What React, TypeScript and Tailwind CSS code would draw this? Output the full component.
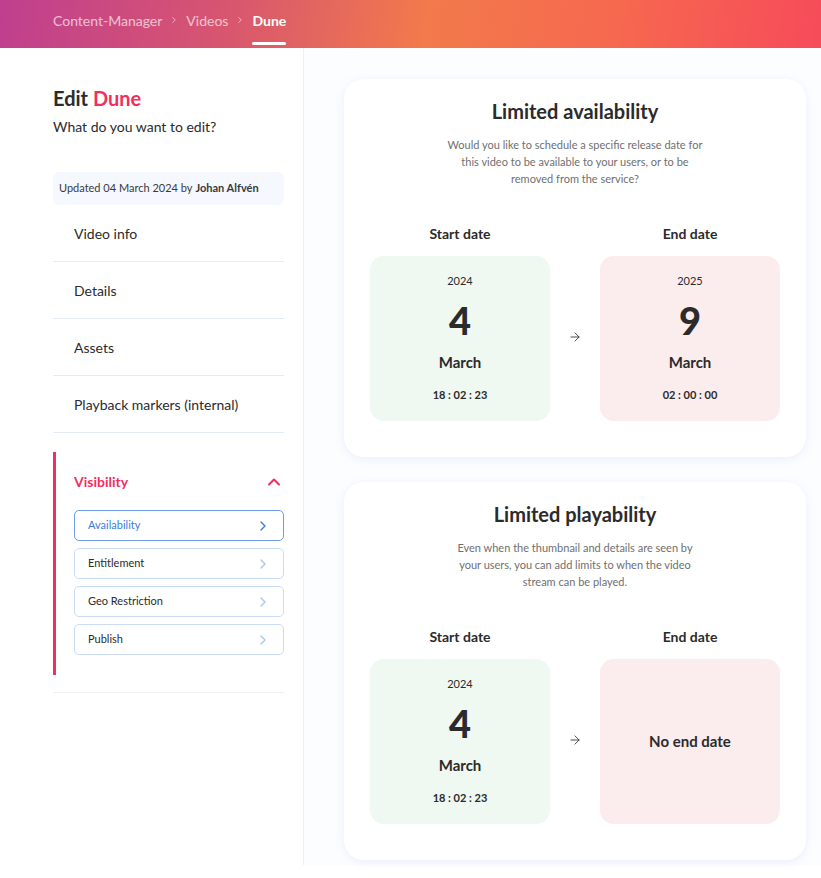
import { ChevronRight, ChevronUp, ArrowRight } from "lucide-react";

const navItems = ["Video info", "Details", "Assets", "Playback markers (internal)"];
const subItems = ["Availability", "Entitlement", "Geo Restriction", "Publish"];

type DateBoxProps = { year?: string; day?: string; month?: string; time?: string; tone: "green" | "red"; empty?: string };

function DateBox({ year, day, month, time, tone, empty }: DateBoxProps) {
  return (
    <div
      className={`w-[180px] h-[165px] rounded-[14px] flex flex-col items-center justify-center text-[#2b2b2b] ${
        tone === "green" ? "bg-[#eff8f1]" : "bg-[#fbeced]"
      }`}>
      {empty ? (
        <p className="text-[15px] font-bold">{empty}</p>
      ) : (
        <>
          <p className="text-[11px] leading-none mt-[-2px]">{year}</p>
          <p className="text-[38px] font-black leading-none mt-[15px]">{day}</p>
          <p className="text-[15px] font-bold leading-none mt-[16px]">{month}</p>
          <p className="text-[11px] font-bold leading-none mt-[19px]">{time}</p>
        </>
      )}
    </div>
  );
}

function DateCard({ title, desc, descClass, end }: { title: string; desc: string; descClass: string; end: DateBoxProps }) {
  return (
    <div className="w-[462px] bg-white rounded-[20px] shadow-[0_2px_10px_rgba(120,150,230,0.14)] px-[26px] pt-[20px] pb-[36px]">
      <h2 className="text-center text-[20px] font-bold text-[#2b2b2b] leading-[24px]">{title}</h2>
      <p className={`mx-auto mt-[13px] text-center text-[11px] leading-[17px] text-[#6f6f6f] ${descClass}`}>{desc}</p>
      <div className="flex items-center mt-[40px]">
        <div className="flex flex-col items-center">
          <p className="text-[14px] font-bold text-[#2b2b2b] leading-none">Start date</p>
          <div className="mt-[15px]">
            <DateBox tone="green" year="2024" day="4" month="March" time="18 : 02 : 23" />
          </div>
        </div>
        <div className="w-[50px] flex justify-center pt-[25px]">
          <ArrowRight className="size-3.5 text-[#333]" strokeWidth={1.5} />
        </div>
        <div className="flex flex-col items-center">
          <p className="text-[14px] font-bold text-[#2b2b2b] leading-none">End date</p>
          <div className="mt-[15px]">
            <DateBox {...end} />
          </div>
        </div>
      </div>
    </div>
  );
}

export default function App() {
  return (
    <div className="min-h-[878px] bg-white font-['Lato','Noto_Sans',sans-serif]">
      <header className="h-[48px] bg-[linear-gradient(100deg,#bf3f8f_0%,#d8566f_28%,#f27a4b_52%,#f6684f_75%,#f64b5a_100%)] flex items-center pl-[53px] pb-[8px]">
        <nav className="flex items-center gap-[7px] text-[14px]">
          <span className="text-white/65">Content-Manager</span>
          <ChevronRight className="size-2.5 text-white/65" />
          <span className="text-white/65">Videos</span>
          <ChevronRight className="size-2.5 text-white/65" />
          <span className="relative text-white font-bold">
            Dune
            <span className="absolute bottom-[-14px] left-0 right-0 h-[3px] rounded-full bg-white" />
          </span>
        </nav>
      </header>

      <div className="flex">
        <aside className="w-[304px] pl-[53px] pr-[19px] border-r border-[#eef1f8] h-[817px]">
          <h1 className="mt-[38px] text-[20px] font-bold text-[#2b2b2b] leading-[24px]">
            Edit <span className="text-[#f0305f]">Dune</span>
          </h1>
          <p className="mt-[6px] text-[14px] text-[#2b2b2b]">What do you want to edit?</p>
          <div className="mt-[35px] h-[33px] rounded-[6px] bg-[#f5f8fe] flex items-center px-[6px] text-[11px] text-[#3a3a3a]">
            Updated 04 March 2024 by <span className="ml-[3px] font-bold">Johan Alfvén</span>
          </div>
          <ul>
            {navItems.map((item) => (
              <li
                key={item}
                className="h-[57px] flex items-center pl-[21px] text-[14px] text-[#2b2b2b] border-b border-[#e3ebf6]">
                {item}
              </li>
            ))}
          </ul>
          <div className="mt-[19px] border-l-[3px] border-[#f0305f] pl-[18px] pt-[19px] pb-[20px]">
            <div className="flex items-center justify-between">
              <span className="text-[14px] font-bold text-[#f0305f]">Visibility</span>
              <ChevronUp className="size-5 text-[#f0305f]" strokeWidth={2.5} />
            </div>
            <div className="mt-[18px] flex flex-col gap-[7px]">
              {subItems.map((s, i) => (
                <button
                  key={s}
                  className={`h-[31px] rounded-[5px] border flex items-center justify-between pl-[13px] pr-[12px] text-[11px] ${
                    i === 0 ? "border-[#6f9be8] text-[#3b7be0]" : "border-[#c9dbf6] text-[#2b2b2b]"
                  }`}>
                  {s}
                  <ChevronRight className={`size-4 ${i === 0 ? "text-[#3b7be0]" : "text-[#a9c6f2]"}`} />
                </button>
              ))}
            </div>
          </div>
          <div className="mt-[17px] border-b border-[#eef1f8]" />
        </aside>

        <main className="flex-1 bg-[#fcfdff] pl-[40px] pt-[31px] flex flex-col gap-[25px]">
          <DateCard
            title="Limited availability"
            desc="Would you like to schedule a specific release date for this video to be available to your users, or to be removed from the service?"
            descClass="w-[262px]"
            end={{ tone: "red", year: "2025", day: "9", month: "March", time: "02 : 00 : 00" }}
          />
          <DateCard
            title="Limited playability"
            desc="Even when the thumbnail and details are seen by your users, you can add limits to when the video stream can be played."
            descClass="w-[246px]"
            end={{ tone: "red", empty: "No end date" }}
          />
        </main>
      </div>
    </div>
  );
}
